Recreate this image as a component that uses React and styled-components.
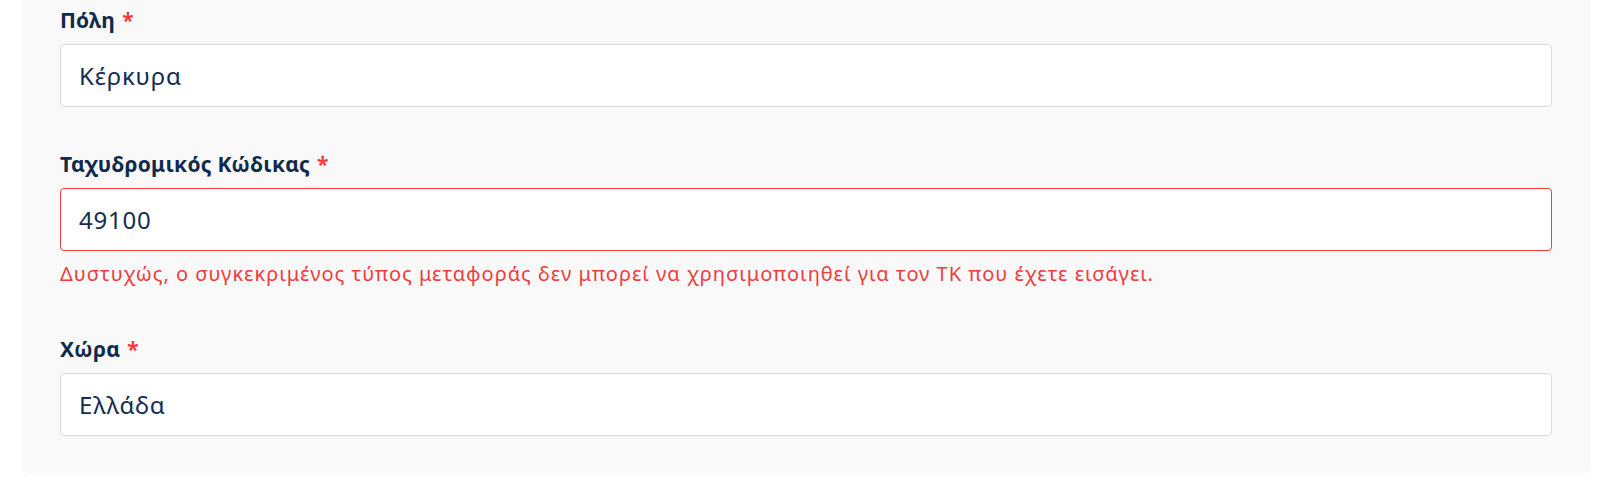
import React from "react";
import styled, { createGlobalStyle } from "styled-components";

const GlobalStyle = createGlobalStyle`
  html, body {
    margin: 0;
    padding: 0;
    background: #ffffff;
  }
  body {
    font-family: "Noto Sans", "Open Sans", sans-serif;
  }
  * { box-sizing: border-box; }
`;

const Page = styled.div`
  width: 1600px;
  height: 497px;
  background: #ffffff;
  padding-left: 22px;
  padding-right: 9px;
`;

const Panel = styled.section`
  background: #f9f9f9;
  border-radius: 0 0 6px 6px;
  padding: 6px 39px 37px 38px;
  display: flex;
  flex-direction: column;
  gap: 43px;
`;

const Field = styled.div`
  display: flex;
  flex-direction: column;
`;

const Label = styled.label`
  font-family: "Noto Sans", "Open Sans", sans-serif;
  font-weight: 700;
  font-size: 21px;
  letter-spacing: 0.25px;
  line-height: 28px;
  color: #102a4c;
  margin-bottom: 10px;
`;

const Required = styled.span`
  color: #f23b3b;
  margin-left: 7px;
`;

const Input = styled.input`
  display: block;
  width: 100%;
  height: 63px;
  padding: 0 18px;
  margin: 0;
  font-family: "Noto Sans", "Open Sans", sans-serif;
  font-size: 24px;
  letter-spacing: 0.8px;
  color: #142c50;
  background: #ffffff;
  border: 1px solid ${(p) => (p.$error ? "#ee4040" : "#dcdcdc")};
  border-radius: 4px;
  outline: none;
`;

const ErrorText = styled.p`
  margin: 9px 0 4px;
  font-family: "Noto Sans", "Open Sans", sans-serif;
  font-size: 20px;
  letter-spacing: 1px;
  line-height: 28px;
  color: #f03c3c;
`;

function FormField({ label, value, error }) {
  return (
    <Field>
      <Label>
        {label}
        <Required>*</Required>
      </Label>
      <Input $error={!!error} defaultValue={value} readOnly />
      {error && <ErrorText>{error}</ErrorText>}
    </Field>
  );
}

export default function App() {
  return (
    <>
      <GlobalStyle />
      <Page>
        <Panel>
          <FormField label="Πόλη" value="Κέρκυρα" />
          <FormField
            label="Ταχυδρομικός Κώδικας"
            value="49100"
            error="Δυστυχώς, ο συγκεκριμένος τύπος μεταφοράς δεν μπορεί να χρησιμοποιηθεί για τον ΤΚ που έχετε εισάγει."
          />
          <FormField label="Χώρα" value="Ελλάδα" />
        </Panel>
      </Page>
    </>
  );
}
